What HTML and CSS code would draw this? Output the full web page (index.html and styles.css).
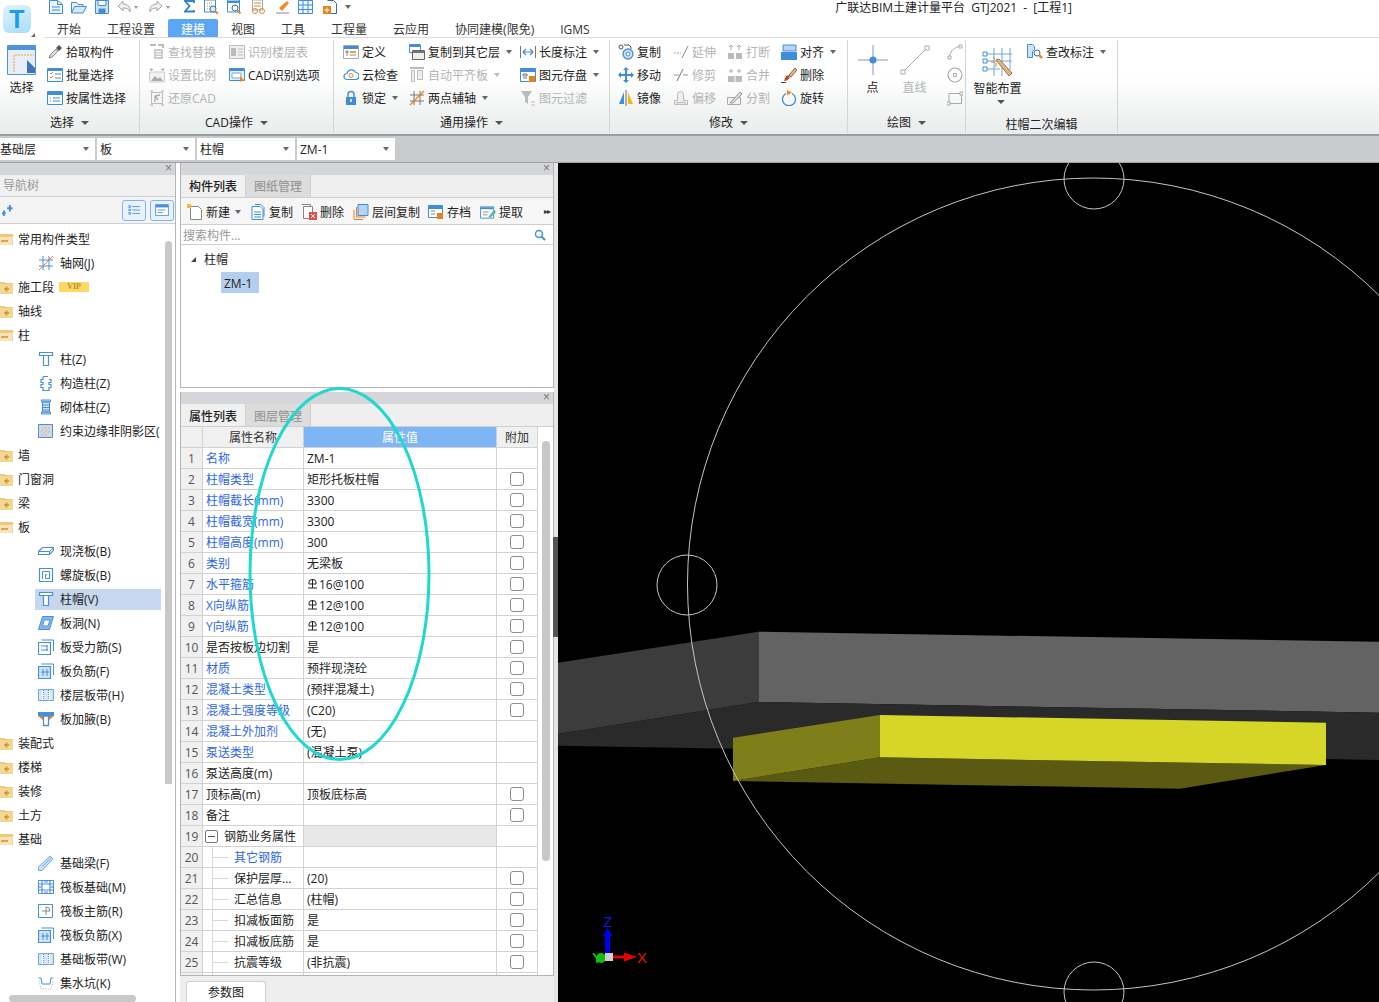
FILE: index.html
```html
<!DOCTYPE html>
<html lang="zh-CN">
<head>
<meta charset="utf-8">
<title>广联达BIM土建计量平台 GTJ2021 - [工程1]</title>
<link rel="stylesheet" href="styles.css">
</head>
<body>
<svg class="sprite" xmlns="http://www.w3.org/2000/svg">
<defs>
<symbol id="q-doc" viewBox="0 0 14 14"><path d="M.5.5h8l5 4v9H.5z" fill="#eaf3fc" stroke="#3f8fd8"/><path d="M8.500.5v4h5M3 7h8M3 10h8" fill="none" stroke="#3f8fd8"/></symbol>
<symbol id="q-open" viewBox="0 0 16 14"><path d="M.5 13V2.500h5l1.500 2h5v2" fill="#eaf3fc" stroke="#3f8fd8"/><path d="M.5 13l3-6.500h12L12 13z" fill="#d7e8f9" stroke="#3f8fd8"/></symbol>
<symbol id="q-save" viewBox="0 0 14 14"><path d="M.5.500h13v13H.5z" fill="#cfe3f7" stroke="#3f8fd8"/><path d="M3 .5h8v5H3z" fill="#fff" stroke="#3f8fd8"/><path d="M3.500 8.500h7v5h-7z" fill="#3f8fd8"/></symbol>
<symbol id="q-undo" viewBox="0 0 21 14"><path d="M6 1L1 6l5 5V8c4 0 6 1 7 4 1-5-2-8-7-8z" fill="#eee" stroke="#a9a9a9"/><path d="M17 6h4l-2 3z" fill="#999"/></symbol>
<symbol id="q-redo" viewBox="0 0 21 14"><path d="M8 1l5 5-5 5V8C4 8 2 9 1 12 0 7 3 4 8 4z" fill="#eee" stroke="#a9a9a9"/><path d="M17 6h4l-2 3z" fill="#999"/></symbol>
<symbol id="q-sum" viewBox="0 0 11 14"><path d="M10 3V1H1l4.500 5L1 11.500h9V10" fill="none" stroke="#2f82cf" stroke-width="1.800"/></symbol>
<symbol id="q-calc" viewBox="0 0 15 14"><path d="M.5 0h11v12H.5z" fill="#fff" stroke="#3f8fd8"/><path d="M3 3h6M3 6h6M3 9h4" stroke="#d98b3a" stroke-dasharray="1 1"/><circle cx="9" cy="9" r="3" fill="#dbe9f8" stroke="#3a6ea8"/><path d="M11 11l3 3" stroke="#e88a1c" stroke-width="2"/></symbol>
<symbol id="q-find" viewBox="0 0 15 14"><path d="M.5 0h12v12H.5z" fill="#fff" stroke="#3f8fd8"/><path d="M.5 1h12v2H.5z" fill="#3f8fd8"/><circle cx="8" cy="8" r="3" fill="#fff" stroke="#3a6ea8"/><path d="M10 10l3.500 3.500" stroke="#e88a1c" stroke-width="2"/></symbol>
<symbol id="q-report" viewBox="0 0 15 14"><path d="M1.500 0h10v10h-10z" fill="#fff" stroke="#aaa"/><path d="M3 3h7M3 6h7" stroke="#d98b3a"/><circle cx="4" cy="11" r="2.500" fill="none" stroke="#d98b3a"/><circle cx="11" cy="11" r="2.500" fill="none" stroke="#d98b3a"/></symbol>
<symbol id="q-pen" viewBox="0 0 15 14"><path d="M4 8l8-7 2 2-7 8z" fill="#ef8a2a"/><path d="M1 13h13" stroke="#8a8a8a"/></symbol>
<symbol id="q-grid" viewBox="0 0 15 14"><path d="M.5.5h14v13H.5zM5 .5v13M10 .5v13M.5 5h14M.5 9.500h14" fill="#eef5fc" stroke="#3f8fd8"/></symbol>
<symbol id="q-add" viewBox="0 0 15 14"><path d="M5.500.5h6l3 3v10H7" fill="#fff" stroke="#3a6ea8"/><path d="M1 6h8v8H1z" fill="#e8811d"/><path d="M5 7.500v5M2.500 10h5" stroke="#fff"/></symbol>
<symbol id="pick" viewBox="0 0 16 16"><path d="M2 14l1-3 6-6 2 2-6 6z" fill="#ddd" stroke="#888"/><path d="M9 4l3-3 3 3-3 3z" fill="#555"/></symbol>
<symbol id="batch" viewBox="0 0 16 16"><path d="M.5 1.500h15v13H.5z" fill="#fff" stroke="#3f8fd8"/><path d="M1 2h14v2H1z" fill="#3f8fd8"/><path d="M3 6l1 1 2-2M3 10l1 1 2-2" fill="none" stroke="#e88a1c"/><path d="M8 7h6M8 11h6" stroke="#3f8fd8"/></symbol>
<symbol id="attr" viewBox="0 0 16 16"><path d="M.5 1.500h15v13H.5z" fill="#fff" stroke="#3f8fd8"/><path d="M1 2h14v3H1z" fill="#3f8fd8"/><path d="M3 8h1M3 11h1" stroke="#3f8fd8"/><path d="M6 8h7M6 11h7" stroke="#3f8fd8"/></symbol>
<symbol id="selbig" viewBox="0 0 29 30"><path d="M.5.5h28v29H.5z" fill="#e7eef7" stroke="#4e94dc"/><path d="M1 1h27v4H1z" fill="#4e94dc"/><path d="M7 27V10h20" fill="none" stroke="#f0a030" stroke-dasharray="2 1"/><path d="M20 15l8 8v5h-8z" fill="#3d76b8"/></symbol>
<symbol id="find" viewBox="0 0 16 16"><path d="M5 5h9v10H5z" fill="#ccc"/><path d="M7 7.500h5M7 10h5M7 12.500h5" stroke="#fff"/><path d="M1 1h6M9 1h5v3" fill="none" stroke="#bbb" stroke-width="2"/></symbol>
<symbol id="floor" viewBox="0 0 16 16"><path d="M.5 1.500h15v13H.5z" fill="#f2f2f2" stroke="#bbb"/><path d="M2 4h5v8H2z" fill="#bbb"/><path d="M9 5h5M9 8h5M9 11h5" stroke="#bbb"/></symbol>
<symbol id="scale" viewBox="0 0 16 16"><path d="M.5 5h15v10H.5z" fill="#f2f2f2" stroke="#ccc"/><path d="M2 14l4-5 3 3 2-2 3 4z" fill="#aaa"/><path d="M2 1v3M14 1v3M1 2.500h3M12 2.500h3" stroke="#aaa"/></symbol>
<symbol id="cadopt" viewBox="0 0 16 16"><path d="M.5 1.500h15v12H.5z" fill="#e8f1fb" stroke="#3f8fd8"/><path d="M1 2h14v2H1z" fill="#3f8fd8"/><path d="M3 6h9v5H3z" fill="#fff" stroke="#7aa7d8"/><path d="M11 9l4 4-4 2z" fill="#e88a1c"/></symbol>
<symbol id="restore" viewBox="0 0 16 16"><path d="M2.500 2.500h11v11h-11z" fill="#f5f5f5" stroke="#bbb"/><path d="M11 5L6 6v6M6 6l3 4" fill="none" stroke="#aaa" stroke-width="1.300"/><path d="M1 1h3M12 1h3M1 15h3M12 15h3" stroke="#aaa"/></symbol>
<symbol id="def" viewBox="0 0 16 16"><path d="M.5 1.500h15v13H.5z" fill="#fff" stroke="#aaa"/><path d="M1 2h14v3H1z" fill="#3f8fd8"/><path d="M7 7h6v2H7z" fill="#f0a030"/><path d="M3 7h2v2H3zM3 11h2M7 11h6" fill="none" stroke="#888"/></symbol>
<symbol id="cloud" viewBox="0 0 16 16"><path d="M4 12.500a3 3 0 010-6 4.500 4.500 0 018.500-1 3.500 3.500 0 010 7z" fill="#fff" stroke="#3f8fd8" stroke-width="1.200"/><circle cx="8" cy="8.500" r="2" fill="none" stroke="#e88a1c"/></symbol>
<symbol id="lock" viewBox="0 0 16 16"><path d="M5 7V4.500a3 3 0 016 0V7" fill="none" stroke="#3f8fd8" stroke-width="1.500"/><path d="M3 7h10v8H3z" fill="#3f8fd8"/><path d="M8 9v3" stroke="#fff" stroke-width="1.500"/></symbol>
<symbol id="copyl" viewBox="0 0 16 16"><path d="M.5.5h11v8H.5z" fill="#fff" stroke="#3f8fd8"/><path d="M1 1h10v2H1z" fill="#3f8fd8"/><path d="M3.500 6.500h12v9h-12z" fill="#eee" stroke="#666"/><path d="M4 7h11v2H4z" fill="#777"/></symbol>
<symbol id="aalign" viewBox="0 0 16 16"><path d="M1 1h14" stroke="#bbb" stroke-width="2"/><path d="M2.500 3.500h3v11h-3zM8.500 3.500h5v9h-5z" fill="#eee" stroke="#bbb"/></symbol>
<symbol id="twopt" viewBox="0 0 16 16"><path d="M5 1v14M11 1v14M1 5h14M1 11h14" stroke="#777"/><path d="M1 15L15 1" stroke="#e8811d" stroke-width="1.200"/></symbol>
<symbol id="len" viewBox="0 0 16 16"><path d="M.5 2v12M15.500 2v12" stroke="#777"/><path d="M3 8h10M3 8l3-3M3 8l3 3M13 8l-3-3M13 8l-3 3" fill="none" stroke="#3f8fd8" stroke-width="1.200"/></symbol>
<symbol id="esave" viewBox="0 0 16 16"><path d="M.5 1.500h15v13H.5z" fill="#fff" stroke="#3f8fd8"/><path d="M1 2h14v3H1z" fill="#3f8fd8"/><path d="M3 7h4v2H3zM3 11h4" fill="none" stroke="#777"/><path d="M9 9h6v6H9z" fill="#e8811d"/></symbol>
<symbol id="filter" viewBox="0 0 16 16"><path d="M1 1h11L8 7v7L5 12V7z" fill="#bbb"/><path d="M11 12h4M11 15h4" stroke="#bbb"/></symbol>
<symbol id="copy" viewBox="0 0 16 16"><circle cx="3" cy="3" r="2" fill="#fff" stroke="#555"/><path d="M6 1h5l2 2v2" fill="none" stroke="#555"/><circle cx="10" cy="10" r="5" fill="#cfe3f7" stroke="#3f8fd8" stroke-width="1.300"/><circle cx="10" cy="10" r="2" fill="#fff" stroke="#3f8fd8"/></symbol>
<symbol id="move" viewBox="0 0 16 16"><path d="M8 0l3 3H9v4h4V5l3 3-3 3V9H9v4h2l-3 3-3-3h2V9H3v2L0 8l3-3v2h4V3H5z" fill="#3f8fd8"/></symbol>
<symbol id="mirror" viewBox="0 0 16 16"><path d="M6 2v12H1z" fill="#3f8fd8"/><path d="M10 2v12h5z" fill="#f5b21b"/><path d="M8 0v16" stroke="#666"/></symbol>
<symbol id="extend" viewBox="0 0 16 16"><path d="M1 9h7" stroke="#aaa" stroke-dasharray="2 1"/><path d="M9 14L15 2" stroke="#888"/></symbol>
<symbol id="trim" viewBox="0 0 16 16"><path d="M1 8h5M10 8h5" stroke="#999"/><path d="M4 14L10 2" stroke="#777"/><path d="M11 8h4" stroke="#bbb" stroke-dasharray="1 1"/></symbol>
<symbol id="offset" viewBox="0 0 16 16"><path d="M1.500 14.500v-4h3v-6a3 3 0 016 0v6h4v4z" fill="#eee" stroke="#bbb"/><path d="M4 14.500v-2h8v2" fill="none" stroke="#bbb"/></symbol>
<symbol id="break" viewBox="0 0 16 16"><path d="M1 9h6v6H1zM9 9h6v6H9z" fill="#bbb"/><path d="M4 1v5M12 1v5M2 3l2-2 2 2M10 3l2-2 2 2" fill="none" stroke="#aaa"/></symbol>
<symbol id="merge" viewBox="0 0 16 16"><path d="M1 9h14v6H1z" fill="#bbb"/><path d="M8 9v6" stroke="#fff"/><path d="M4 2v4M12 2v4" stroke="#aaa"/><path d="M2 4h4M10 4h4" stroke="#aaa"/></symbol>
<symbol id="split" viewBox="0 0 16 16"><path d="M.5 7.500h13v7H.5z" fill="#f2f2f2" stroke="#aaa"/><path d="M3 13L13 2l2 2-9 9z" fill="#ddd" stroke="#999"/></symbol>
<symbol id="align" viewBox="0 0 16 16"><path d="M2 1h13v6H2z" fill="#b9d4f2" stroke="#3f8fd8"/><path d="M0 8h16v8H0z" fill="#3f8fd8"/></symbol>
<symbol id="del" viewBox="0 0 16 16"><path d="M8 8l6-7 2 2-6 7z" fill="#d9b98a" stroke="#8a6a3a"/><path d="M3 14c3 0 5-2 6-4L7 8c-3 1-3 4-4 6z" fill="#a8512a"/><path d="M0 15.500h5" stroke="#444"/></symbol>
<symbol id="rotate" viewBox="0 0 16 16"><path d="M5 3.500a6.500 6.500 0 106 0" fill="none" stroke="#3f8fd8" stroke-width="1.300"/><path d="M6 0l5 2.500-5 3z" fill="#f09020"/></symbol>
<symbol id="point" viewBox="0 0 30 30"><path d="M15 0v30M0 15h30" stroke="#7e9cc0"/><circle cx="15" cy="15" r="3.500" fill="#3f8fd8"/></symbol>
<symbol id="line" viewBox="0 0 30 30"><path d="M3 27L27 3" stroke="#aaa"/><path d="M1 25h4v4H1zM25 1h4v4h-4z" fill="#fff" stroke="#aaa"/></symbol>
<symbol id="arc" viewBox="0 0 16 16"><path d="M2.500 13C3 7 8 2.500 13.500 2.500" fill="none" stroke="#aaa"/><path d="M1 12h3v3H1zM12 1h3v3h-3z" fill="#fff" stroke="#aaa"/></symbol>
<symbol id="circ" viewBox="0 0 16 16"><circle cx="8" cy="8" r="7" fill="#fff" stroke="#aaa" stroke-width="1.200"/><path d="M6.500 6.500h3v3h-3z" fill="#fff" stroke="#aaa"/></symbol>
<symbol id="rect" viewBox="0 0 16 16"><path d="M2 3.500h12.500v10H2z" fill="none" stroke="#aaa"/><path d="M0 12h3v3H0zM13 2h3v3h-3z" fill="#fff" stroke="#aaa"/></symbol>
<symbol id="smart" viewBox="0 0 31 30"><path d="M12 1v28M20 1v28M28 1v22M4 7h26M4 14h26M4 22h14" stroke="#6aa8e6"/><path d="M1 5h4v4H1zM1 12h4v4H1zM1 20h4v4H1z" fill="#fff" stroke="#3f8fd8"/><path d="M14 13l3-1 13 14-3 3z" fill="#d9b98a" stroke="#a8702a"/><path d="M11 10l2 2M14 16v4M9 15h4" stroke="#f07020"/></symbol>
<symbol id="check" viewBox="0 0 16 16"><path d="M.5.500h5l2 2v3l-2 2v6h-5z" fill="#cfe3f7" stroke="#3f8fd8"/><circle cx="10" cy="9" r="3" fill="#fff" stroke="#3a6ea8"/><path d="M12 11l3 3" stroke="#e88a1c" stroke-width="2.500"/></symbol>
<symbol id="fp" viewBox="0 0 13 13"><path d="M0 1h5l1 1h7v11H0z" fill="#f1c97a"/><path d="M0 3h13v10H0z" fill="#f5d793"/><path d="M6.500 5.500v5M4 8h5" stroke="#c89338" stroke-width="1.500"/></symbol>
<symbol id="fm" viewBox="0 0 13 13"><path d="M0 1h13v11H0z" fill="#f1c97a"/><path d="M0 4h13l-1 8H0z" fill="#f8e3b5"/><path d="M1 8h7" stroke="#c89338" stroke-width="1.500"/></symbol>
<symbol id="n-grid" viewBox="0 0 16 16"><path d="M5 1v14M11 1v14M1 5h14M1 11h14" stroke="#4a8fdc"/><path d="M1 15L15 1" stroke="#e8811d"/></symbol>
<symbol id="n-col" viewBox="0 0 16 16"><path d="M1.500 1.500h13v3h-13zM5.500 4.500h5v10h-5z" fill="#fff" stroke="#4a8fdc" stroke-width="1.200"/></symbol>
<symbol id="n-gz" viewBox="0 0 16 16"><path d="M5 1h6v3H5zM3 4h10v3H3zM5 7h6v2H5zM3 9h10v3H3zM5 12h6v3H5z" fill="#fff"/><path d="M5 1.500h5M5 1.500v3H3v3h2v2H3v3h2v3h6v-3h2v-3h-2v-2h2v-3h-2" fill="none" stroke="#4a8fdc" stroke-width="1.200"/></symbol>
<symbol id="n-br" viewBox="0 0 16 16"><path d="M3.500 1h9v2h-9zM4.500 3h7v10h-7zM3.500 13h9v2h-9z" fill="#cfe3f7" stroke="#4a8fdc"/><path d="M5 6h6M5 8.500h6M5 11h6" stroke="#4a8fdc"/></symbol>
<symbol id="n-cons" viewBox="0 0 16 16"><path d="M.5 1.500h14v13H.5z" fill="#d8d8d8" stroke="#4a8fdc"/><path d="M3 13l9-9M3 9l5-5M7 13l5-5" stroke="#aaa" stroke-dasharray="1 1"/></symbol>
<symbol id="n-slab" viewBox="0 0 16 16"><path d="M.5 8.500l4-4h11v3l-4 4h-11z" fill="#fff" stroke="#4a8fdc" stroke-width="1.200"/><path d="M.5 8.500h11l4-4M11.500 8.500v3" fill="none" stroke="#4a8fdc"/></symbol>
<symbol id="n-sp" viewBox="0 0 16 16"><path d="M1.500 1.500h13v13h-13z" fill="#fff" stroke="#4a8fdc" stroke-width="1.200"/><path d="M4.500 12V4.500h7v7H7.500V7.500h1.500" fill="none" stroke="#4a8fdc"/></symbol>
<symbol id="n-hole" viewBox="0 0 16 16"><path d="M4.500 1.500h11l-4 13H.5z" fill="#86b5e8" stroke="#4a8fdc"/><path d="M6 5h6l-2 6H4.500z" fill="#fff" stroke="#4a8fdc"/></symbol>
<symbol id="n-bar" viewBox="0 0 16 16"><path d="M3.500 1h12v11" fill="none" stroke="#4a8fdc"/><path d="M.5 3.500h12v12H.5z" fill="#fff" stroke="#4a8fdc" stroke-width="1.200"/><path d="M3 7h7M3 11h7M9 6v6" stroke="#4a8fdc"/></symbol>
<symbol id="n-neg" viewBox="0 0 16 16"><path d="M3.500 1h12v11" fill="none" stroke="#4a8fdc"/><path d="M.5 3.500h12v12H.5z" fill="#cfe3f7" stroke="#4a8fdc" stroke-width="1.200"/><path d="M3 9h8M5 6v7M9 6v7" stroke="#4a8fdc"/></symbol>
<symbol id="n-band" viewBox="0 0 16 16"><path d="M.5 2.500h15v11H.5z" fill="#d6e6f7" stroke="#6aa8e6"/><path d="M5 3v10M11 3v10" stroke="#fff" stroke-width="2"/><path d="M5.500 3v10M10.500 3v10" stroke="#4a8fdc" stroke-dasharray="1 1"/></symbol>
<symbol id="n-haunch" viewBox="0 0 16 16"><path d="M0 1h16v4H0z" fill="#4a8fdc"/><path d="M0 5h5v4zM16 5h-5v4z" fill="#e8811d"/><path d="M5.500 5h5v9.500h-5z" fill="#fff" stroke="#4a8fdc" stroke-width="1.300"/></symbol>
<symbol id="n-beam" viewBox="0 0 16 16"><path d="M.5 12L12 1l3 3L4 15.500H.5z" fill="#cfe3f7" stroke="#6aa8e6"/><path d="M4 12L14 2" stroke="#6aa8e6"/></symbol>
<symbol id="n-raft" viewBox="0 0 16 16"><path d="M.5 1.500h15v13H.5z" fill="#fff" stroke="#4a8fdc"/><path d="M.5 5h15M.5 11h15M4 1.500v13M12 1.500v13M6 3h4M6 13h4M2 7v2M14 7v2" stroke="#4a8fdc" stroke-width="1.200"/></symbol>
<symbol id="n-main" viewBox="0 0 16 16"><path d="M.5 1.500h14v13H.5z" fill="#fff" stroke="#4a8fdc"/><path d="M8 4v8M4 8h8" stroke="#888"/><path d="M8 4a4 4 0 014 4" fill="none" stroke="#888"/></symbol>
<symbol id="n-pit" viewBox="0 0 16 16"><path d="M.5 3h2.500l1 6h8l1-6h2.500" fill="none" stroke="#4a8fdc"/><path d="M1 6l2 8h10l2-8" fill="none" stroke="#aaa" stroke-dasharray="1 1.500"/></symbol>
<symbol id="n-add" viewBox="0 0 13 12"><path d="M7.500 0v7M4.500 3.500h6M1 6v6M-1 9h4" transform="translate(1 0)" stroke="#3f8fd8" stroke-width="2" fill="none"/></symbol>
<symbol id="v-list" viewBox="0 0 16 14"><path d="M2 2h2v2H2zM2 6h2v2H2zM2 10h2v2H2z" fill="none" stroke="#4a8fdc"/><path d="M6 3h9M6 7h9M6 11h9" stroke="#4a8fdc"/></symbol>
<symbol id="v-panel" viewBox="0 0 16 14"><path d="M.5.500h15v13H.5z" fill="#fff" stroke="#4a8fdc"/><path d="M1 1h14v3H1z" fill="#4a8fdc"/><path d="M3 7h9M3 10h6" stroke="#4a8fdc"/></symbol>
<symbol id="m-new" viewBox="0 0 16 16"><path d="M3.500 2.500h8l3 3v10h-11z" fill="#fff" stroke="#888"/><path d="M0 0h4v4H0z" fill="#f3b93a"/></symbol>
<symbol id="m-copy" viewBox="0 0 14 16"><path d="M4 .5h6l3 3v9" fill="none" stroke="#3f8fd8"/><path d="M1 2.500h8l3 3v10H1z" fill="#fff" stroke="#3f8fd8"/><path d="M3 8h7M3 10.500h7M3 13h7" stroke="#3f8fd8"/></symbol>
<symbol id="m-del" viewBox="0 0 16 16"><path d="M.5.5h9v10" fill="none" stroke="#888"/><path d="M2.500 2.500h9v12h-9z" fill="#fff" stroke="#888"/><path d="M8 8h8v8H8z" fill="#e0504a"/><path d="M10 10l4 4M14 10l-4 4" stroke="#fff"/></symbol>
<symbol id="m-layer" viewBox="0 0 15 16"><path d="M4.500.5h10v11h-10z" fill="#b6d3f3" stroke="#3f8fd8"/><path d="M3 3v10h9M.5 6v9.500h9" fill="none" stroke="#e8811d"/></symbol>
<symbol id="m-arch" viewBox="0 0 16 16"><path d="M.5 1.500h14v12H.5z" fill="#fff" stroke="#3f8fd8"/><path d="M1 2h13v3H1z" fill="#3f8fd8"/><path d="M3 7h4M3 10h4" stroke="#888"/><path d="M9 9h6v6H9z" fill="#e8811d"/></symbol>
<symbol id="m-ext" viewBox="0 0 17 16"><path d="M.5 2.500h14v12H.5z" fill="#fff" stroke="#3f8fd8"/><path d="M1 3h13v2H1z" fill="#3f8fd8"/><path d="M3 8h6M3 11h5" stroke="#888"/><path d="M9 13l6-7 2 2-6 6z" fill="#4db6a8"/></symbol>
<symbol id="m-srch" viewBox="0 0 12 12"><circle cx="5" cy="5" r="3.500" fill="none" stroke="#3f95d8" stroke-width="1.500"/><path d="M7.500 7.500l3.500 3.500" stroke="#3f95d8" stroke-width="2"/></symbol>
<symbol id="rebar" viewBox="0 0 9 10"><path d="M1 5V3a3.500 2.500 0 017 0v2zM4.500 0v9M0 9h9" fill="none" stroke="#222"/></symbol>
</defs>
</svg>

<header class="top">
  <div class="logo-col">
    <div class="logo"><span class="logo-t">T</span></div>
    <i class="logo-mark"></i>
  </div>
  <div class="top-right">
    <div class="quick">
      <svg class="q w14"><use href="#q-doc"/></svg>
      <svg class="q w16"><use href="#q-open"/></svg>
      <svg class="q w14"><use href="#q-save"/></svg>
      <svg class="q w21"><use href="#q-undo"/></svg>
      <svg class="q w21 ml3"><use href="#q-redo"/></svg>
      <svg class="q w11 ml6"><use href="#q-sum"/></svg>
      <svg class="q w15 ml1"><use href="#q-calc"/></svg>
      <svg class="q w15"><use href="#q-find"/></svg>
      <svg class="q w15 ml1"><use href="#q-report"/></svg>
      <svg class="q w15 ml1"><use href="#q-pen"/></svg>
      <svg class="q w15"><use href="#q-grid"/></svg>
      <svg class="q w15 ml1"><use href="#q-add"/></svg>
      <span class="q-more"></span>
      <div class="title">广联达BIM土建计量平台 GTJ2021 - [工程1]</div>
    </div>
    <nav class="tabs">
      <span class="tab">开始</span><span class="tab">工程设置</span><span class="tab active">建模</span><span class="tab">视图</span><span class="tab">工具</span><span class="tab">工程量</span><span class="tab">云应用</span><span class="tab">协同建模(限免)</span><span class="tab">IGMS</span>
    </nav>
  </div>
</header>

<section class="ribbon">
  <div class="rg g1">
    <div class="rg-body pl7">
      <div class="col big w40"><svg class="big-ic"><use href="#selbig"/></svg><span class="big-lb">选择</span></div>
      <div class="col">
        <div class="ri"><svg class="ic"><use href="#pick"/></svg><span>拾取构件</span></div>
        <div class="ri"><svg class="ic"><use href="#batch"/></svg><span>批量选择</span></div>
        <div class="ri"><svg class="ic"><use href="#attr"/></svg><span>按属性选择</span></div>
      </div>
    </div>
    <div class="rg-label">选择<i class="caret dark"></i></div>
  </div>
  <div class="rg g2">
    <div class="rg-body pl9">
      <div class="col w80">
        <div class="ri off"><svg class="ic"><use href="#find"/></svg><span>查找替换</span></div>
        <div class="ri off"><svg class="ic"><use href="#scale"/></svg><span>设置比例</span></div>
        <div class="ri off"><svg class="ic"><use href="#restore"/></svg><span>还原CAD</span></div>
      </div>
      <div class="col">
        <div class="ri off"><svg class="ic"><use href="#floor"/></svg><span>识别楼层表</span></div>
        <div class="ri"><svg class="ic"><use href="#cadopt"/></svg><span>CAD识别选项</span></div>
      </div>
    </div>
    <div class="rg-label">CAD操作<i class="caret dark"></i></div>
  </div>
  <div class="rg g3">
    <div class="rg-body pl9">
      <div class="col w66">
        <div class="ri"><svg class="ic"><use href="#def"/></svg><span>定义</span></div>
        <div class="ri"><svg class="ic"><use href="#cloud"/></svg><span>云检查</span></div>
        <div class="ri"><svg class="ic"><use href="#lock"/></svg><span>锁定</span><i class="caret"></i></div>
      </div>
      <div class="col w111">
        <div class="ri"><svg class="ic"><use href="#copyl"/></svg><span>复制到其它层</span><i class="caret"></i></div>
        <div class="ri off"><svg class="ic"><use href="#aalign"/></svg><span>自动平齐板</span><i class="caret light"></i></div>
        <div class="ri"><svg class="ic"><use href="#twopt"/></svg><span>两点辅轴</span><i class="caret"></i></div>
      </div>
      <div class="col">
        <div class="ri"><svg class="ic"><use href="#len"/></svg><span>长度标注</span><i class="caret"></i></div>
        <div class="ri"><svg class="ic"><use href="#esave"/></svg><span>图元存盘</span><i class="caret"></i></div>
        <div class="ri off"><svg class="ic"><use href="#filter"/></svg><span>图元过滤</span></div>
      </div>
    </div>
    <div class="rg-label">通用操作<i class="caret dark"></i></div>
  </div>
  <div class="rg g4">
    <div class="rg-body pl8">
      <div class="col w55">
        <div class="ri"><svg class="ic"><use href="#copy"/></svg><span>复制</span></div>
        <div class="ri"><svg class="ic"><use href="#move"/></svg><span>移动</span></div>
        <div class="ri"><svg class="ic"><use href="#mirror"/></svg><span>镜像</span></div>
      </div>
      <div class="col w54">
        <div class="ri off"><svg class="ic"><use href="#extend"/></svg><span>延伸</span></div>
        <div class="ri off"><svg class="ic"><use href="#trim"/></svg><span>修剪</span></div>
        <div class="ri off"><svg class="ic"><use href="#offset"/></svg><span>偏移</span></div>
      </div>
      <div class="col w54">
        <div class="ri off"><svg class="ic"><use href="#break"/></svg><span>打断</span></div>
        <div class="ri off"><svg class="ic"><use href="#merge"/></svg><span>合并</span></div>
        <div class="ri off"><svg class="ic"><use href="#split"/></svg><span>分割</span></div>
      </div>
      <div class="col">
        <div class="ri"><svg class="ic"><use href="#align"/></svg><span>对齐</span><i class="caret"></i></div>
        <div class="ri"><svg class="ic"><use href="#del"/></svg><span>删除</span></div>
        <div class="ri"><svg class="ic"><use href="#rotate"/></svg><span>旋转</span></div>
      </div>
    </div>
    <div class="rg-label">修改<i class="caret dark"></i></div>
  </div>
  <div class="rg g5">
    <div class="rg-body pl10">
      <div class="col big w42"><svg class="big-ic b30"><use href="#point"/></svg><span class="big-lb">点</span></div>
      <div class="col big w47"><svg class="big-ic b30"><use href="#line"/></svg><span class="big-lb off-t">直线</span></div>
      <div class="col">
        <div class="ri"><svg class="ic"><use href="#arc"/></svg></div>
        <div class="ri"><svg class="ic"><use href="#circ"/></svg></div>
        <div class="ri"><svg class="ic"><use href="#rect"/></svg></div>
      </div>
    </div>
    <div class="rg-label">绘图<i class="caret dark"></i></div>
  </div>
  <div class="rg g6">
    <div class="rg-body pl7">
      <div class="col big w54"><svg class="big-ic smart"><use href="#smart"/></svg><span class="big-lb">智能布置</span><i class="caret dark under"></i></div>
      <div class="col">
        <div class="ri"><svg class="ic"><use href="#check"/></svg><span>查改标注</span><i class="caret"></i></div>
      </div>
    </div>
    <div class="rg-label low">柱帽二次编辑</div>
  </div>
</section>

<section class="selbar">
  <div class="sel first"><span>基础层</span><i class="caret"></i></div>
  <div class="sel"><span>板</span><i class="caret"></i></div>
  <div class="sel"><span>柱帽</span><i class="caret"></i></div>
  <div class="sel"><span>ZM-1</span><i class="caret"></i></div>
</section>

<main class="main">
  <aside class="nav">
    <div class="strip"><span class="x">×</span></div>
    <div class="nav-title">导航树</div>
    <div class="nav-tools">
      <svg class="nav-add"><use href="#n-add"/></svg>
      <span class="vbtn"><svg class="vic"><use href="#v-list"/></svg></span>
      <span class="vbtn"><svg class="vic"><use href="#v-panel"/></svg></span>
    </div>
    <div class="nav-body">
      <div class="tree">
        <div class="tg"><svg class="fo"><use href="#fm"/></svg><span>常用构件类型</span></div>
        <div class="tc"><div class="tci"><svg class="ic"><use href="#n-grid"/></svg><span>轴网(J)</span></div></div>
        <div class="tg"><svg class="fo"><use href="#fp"/></svg><span>施工段</span><b class="vip">VIP</b></div>
        <div class="tg"><svg class="fo"><use href="#fp"/></svg><span>轴线</span></div>
        <div class="tg"><svg class="fo"><use href="#fm"/></svg><span>柱</span></div>
        <div class="tc"><div class="tci"><svg class="ic"><use href="#n-col"/></svg><span>柱(Z)</span></div></div>
        <div class="tc"><div class="tci"><svg class="ic"><use href="#n-gz"/></svg><span>构造柱(Z)</span></div></div>
        <div class="tc"><div class="tci"><svg class="ic"><use href="#n-br"/></svg><span>砌体柱(Z)</span></div></div>
        <div class="tc"><div class="tci"><svg class="ic"><use href="#n-cons"/></svg><span>约束边缘非阴影区(</span></div></div>
        <div class="tg"><svg class="fo"><use href="#fp"/></svg><span>墙</span></div>
        <div class="tg"><svg class="fo"><use href="#fp"/></svg><span>门窗洞</span></div>
        <div class="tg"><svg class="fo"><use href="#fp"/></svg><span>梁</span></div>
        <div class="tg"><svg class="fo"><use href="#fm"/></svg><span>板</span></div>
        <div class="tc"><div class="tci"><svg class="ic"><use href="#n-slab"/></svg><span>现浇板(B)</span></div></div>
        <div class="tc"><div class="tci"><svg class="ic"><use href="#n-sp"/></svg><span>螺旋板(B)</span></div></div>
        <div class="tc"><div class="tci sel-row"><svg class="ic"><use href="#n-col"/></svg><span>柱帽(V)</span></div></div>
        <div class="tc"><div class="tci"><svg class="ic"><use href="#n-hole"/></svg><span>板洞(N)</span></div></div>
        <div class="tc"><div class="tci"><svg class="ic"><use href="#n-bar"/></svg><span>板受力筋(S)</span></div></div>
        <div class="tc"><div class="tci"><svg class="ic"><use href="#n-neg"/></svg><span>板负筋(F)</span></div></div>
        <div class="tc"><div class="tci"><svg class="ic"><use href="#n-band"/></svg><span>楼层板带(H)</span></div></div>
        <div class="tc"><div class="tci"><svg class="ic"><use href="#n-haunch"/></svg><span>板加腋(B)</span></div></div>
        <div class="tg"><svg class="fo"><use href="#fp"/></svg><span>装配式</span></div>
        <div class="tg"><svg class="fo"><use href="#fp"/></svg><span>楼梯</span></div>
        <div class="tg"><svg class="fo"><use href="#fp"/></svg><span>装修</span></div>
        <div class="tg"><svg class="fo"><use href="#fp"/></svg><span>土方</span></div>
        <div class="tg"><svg class="fo"><use href="#fm"/></svg><span>基础</span></div>
        <div class="tc"><div class="tci"><svg class="ic"><use href="#n-beam"/></svg><span>基础梁(F)</span></div></div>
        <div class="tc"><div class="tci"><svg class="ic"><use href="#n-raft"/></svg><span>筏板基础(M)</span></div></div>
        <div class="tc"><div class="tci"><svg class="ic"><use href="#n-main"/></svg><span>筏板主筋(R)</span></div></div>
        <div class="tc"><div class="tci"><svg class="ic"><use href="#n-neg"/></svg><span>筏板负筋(X)</span></div></div>
        <div class="tc"><div class="tci"><svg class="ic"><use href="#n-band"/></svg><span>基础板带(W)</span></div></div>
        <div class="tc"><div class="tci"><svg class="ic"><use href="#n-pit"/></svg><span>集水坑(K)</span></div></div>
        <div class="hbar"></div>
      </div>
      <div class="nav-track"><div class="nav-thumb"></div></div>
    </div>
  </aside>

  <div class="mid">
    <section class="panel p1">
      <div class="strip"><span class="x">×</span></div>
      <div class="ptabs t22"><span class="ptab on">构件列表</span><span class="ptab">图纸管理</span></div>
      <div class="ptools">
        <span class="pt w63"><svg class="ic"><use href="#m-new"/></svg><span>新建</span><i class="caret"></i></span>
        <span class="pt w51"><svg class="ic"><use href="#m-copy"/></svg><span>复制</span></span>
        <span class="pt w52"><svg class="ic"><use href="#m-del"/></svg><span>删除</span></span>
        <span class="pt w75"><svg class="ic"><use href="#m-layer"/></svg><span>层间复制</span></span>
        <span class="pt w52"><svg class="ic"><use href="#m-arch"/></svg><span>存档</span></span>
        <span class="pt w62"><svg class="ic"><use href="#m-ext"/></svg><span>提取</span></span>
        <span class="more">▸▸</span>
      </div>
      <div class="search"><span>搜索构件...</span><svg class="srch"><use href="#m-srch"/></svg></div>
      <div class="clist">
        <div class="cgroup"><i class="tri"></i><span>柱帽</span></div>
        <div class="citem"><span>ZM-1</span></div>
      </div>
    </section>
    <section class="panel p2">
      <div class="strip"><span class="x">×</span></div>
      <div class="ptabs t23"><span class="ptab on">属性列表</span><span class="ptab">图层管理</span></div>
      <div class="tbl-wrap">
        <table class="props">
          <colgroup><col class="c0"><col class="c1"><col class="c2"><col class="c3"></colgroup>
          <thead><tr><th></th><th>属性名称</th><th class="hl">属性值</th><th>附加</th></tr></thead>
          <tbody>
            <tr><td>1</td><td class="blue">名称</td><td>ZM-1</td><td></td></tr>
            <tr><td>2</td><td class="blue">柱帽类型</td><td>矩形托板柱帽</td><td><i class="cb"></i></td></tr>
            <tr><td>3</td><td class="blue">柱帽截长(mm)</td><td>3300</td><td><i class="cb"></i></td></tr>
            <tr><td>4</td><td class="blue">柱帽截宽(mm)</td><td>3300</td><td><i class="cb"></i></td></tr>
            <tr><td>5</td><td class="blue">柱帽高度(mm)</td><td>300</td><td><i class="cb"></i></td></tr>
            <tr><td>6</td><td class="blue">类别</td><td>无梁板</td><td><i class="cb"></i></td></tr>
            <tr><td>7</td><td class="blue">水平箍筋</td><td><svg class="rb"><use href="#rebar"/></svg>16@100</td><td><i class="cb"></i></td></tr>
            <tr><td>8</td><td class="blue">X向纵筋</td><td><svg class="rb"><use href="#rebar"/></svg>12@100</td><td><i class="cb"></i></td></tr>
            <tr><td>9</td><td class="blue">Y向纵筋</td><td><svg class="rb"><use href="#rebar"/></svg>12@100</td><td><i class="cb"></i></td></tr>
            <tr><td>10</td><td>是否按板边切割</td><td>是</td><td><i class="cb"></i></td></tr>
            <tr><td>11</td><td class="blue">材质</td><td>预拌现浇砼</td><td><i class="cb"></i></td></tr>
            <tr><td>12</td><td class="blue">混凝土类型</td><td>(预拌混凝土)</td><td><i class="cb"></i></td></tr>
            <tr><td>13</td><td class="blue">混凝土强度等级</td><td>(C20)</td><td><i class="cb"></i></td></tr>
            <tr><td>14</td><td class="blue">混凝土外加剂</td><td>(无)</td><td></td></tr>
            <tr><td>15</td><td class="blue">泵送类型</td><td>(混凝土泵)</td><td></td></tr>
            <tr><td>16</td><td>泵送高度(m)</td><td></td><td></td></tr>
            <tr><td>17</td><td>顶标高(m)</td><td>顶板底标高</td><td><i class="cb"></i></td></tr>
            <tr><td>18</td><td>备注</td><td></td><td><i class="cb"></i></td></tr>
            <tr><td>19</td><td class="grp"><i class="minus"></i>钢筋业务属性</td><td class="gv"></td><td></td></tr>
            <tr><td>20</td><td class="sub blue">其它钢筋</td><td></td><td></td></tr>
            <tr><td>21</td><td class="sub">保护层厚...</td><td>(20)</td><td><i class="cb"></i></td></tr>
            <tr><td>22</td><td class="sub">汇总信息</td><td>(柱帽)</td><td><i class="cb"></i></td></tr>
            <tr><td>23</td><td class="sub">扣减板面筋</td><td>是</td><td><i class="cb"></i></td></tr>
            <tr><td>24</td><td class="sub">扣减板底筋</td><td>是</td><td><i class="cb"></i></td></tr>
            <tr><td>25</td><td class="sub">抗震等级</td><td>(非抗震)</td><td><i class="cb"></i></td></tr>
            <tr><td></td><td class="sub"></td><td></td><td></td></tr>
          </tbody>
        </table>
        <div class="tbl-track"><div class="tbl-thumb"></div></div>
      </div>
    </section>
    <div class="bottom-tabs"><span class="btab">参数图</span></div>
  </div>

  <div class="splitter"><i class="grip"></i></div>

  <div class="canvas">
    <svg class="scene" viewBox="558 163 821 839" xmlns="http://www.w3.org/2000/svg">
      <polygon points="558,662.700 758.500,631.700 758.500,702 558,734" fill="#3c3c3c"/>
      <polygon points="758.500,631.700 1379,641.700 1379,712.700 758.500,702" fill="#636363"/>
      <polygon points="558,734 758.500,702 1379,712.700 1379,760 558,745.700" fill="#2a2a2a"/>
      <polygon points="733,781 880,757.300 1326,765 1180,788.700" fill="#5a5a12"/>
      <polygon points="733,737.700 880,715 880,757.300 733,781" fill="#7f7f1a"/>
      <polygon points="880,715 1326,722.700 1326,765 880,757.300" fill="#d6d628"/>
      <g fill="none" stroke="#c4c4c4" stroke-width="1">
        <circle cx="1093.500" cy="584" r="406"/>
        <circle cx="1094" cy="179" r="30"/>
        <circle cx="687" cy="585" r="30"/>
        <circle cx="1094" cy="992" r="30"/>
      </g>
      <text x="603" y="927" class="ax" fill="#1414e0">Z</text>
      <path d="M607.500 928l5 8h-2.500v17h-5v-17h-2.500z" fill="#0000f0"/>
      <path d="M612 955.500h12v-3l13 4.500-13 4.500v-3h-12z" fill="#e80000"/>
      <text x="637" y="963" class="ax" fill="#e01414">X</text>
      <text x="592" y="963" class="ax" fill="#18e018">Y</text>
      <circle cx="601" cy="958" r="5" fill="#10c010"/>
      <rect x="605" y="953" width="8" height="8" fill="#d0d0d0"/>
    </svg>
  </div>
</main>

<svg class="mark" viewBox="0 0 1379 1002" xmlns="http://www.w3.org/2000/svg">
  <ellipse cx="339.500" cy="574" rx="89.500" ry="185.500" fill="none" stroke="#1fd8d0" stroke-width="3"/>
</svg>
</body>
</html>
```
FILE: styles.css
```css
* { box-sizing: border-box; }
html, body { margin: 0; padding: 0; }
body {
  position: relative;
  width: 1379px;
  height: 1002px;
  overflow: hidden;
  background: #fff;
  color: #222;
  font: 12px/16px "Open Sans", "Noto Sans CJK SC", sans-serif;
  display: flex;
  flex-direction: column;
}
.sprite { width: 0; height: 0; position: absolute; }
svg { display: block; flex: none; overflow: visible; }
.ic { width: 16px; height: 16px; }

/* text in centred flex rows sits one pixel lower than its icon */
.ri span, .tg span, .tci span, .pt span, .sel span, .search span, .cgroup span { padding-top: 2px; }

/* header */
.top { display: flex; height: 38px; flex: none; }
.logo-col { width: 44px; position: relative; border-right: 1px solid transparent; }
.logo {
  width: 28px; height: 28px; margin: 5px 0 0 3px;
  border-radius: 6px;
  background: linear-gradient(160deg, #dff3fe, #a9ddfb);
  display: flex; align-items: center; justify-content: center;
}
.logo-t { color: #1c9cf0; font: bold 25px/28px "Liberation Sans", sans-serif; }
.logo-mark { position: absolute; left: 31px; top: 33px; border: 2px solid transparent; border-right-color: #666; border-bottom-color: #666; }
.top-right { flex: 1; display: flex; flex-direction: column; }
.quick { height: 19px; display: flex; align-items: flex-start; padding: 0 307px 0 5px; gap: 8px; }
.q { height: 14px; }
.w14 { width: 14px; } .w16 { width: 16px; } .w21 { width: 21px; } .w11 { width: 11px; } .w15 { width: 15px; }
.ml1 { margin-left: 1px; } .ml3 { margin-left: 3px; } .ml6 { margin-left: 6px; }
.q-more { width: 6px; height: 6px; margin-top: 5px; border: 3px solid transparent; border-top: 4px solid #666; box-shadow: 0 -2px 0 -1px #fff; }
.title { margin-left: auto; line-height: 16px; white-space: nowrap; color: #222; word-spacing: 3px; }
.tabs { height: 19px; display: flex; border-bottom: 1px solid #dcdcdc; align-items: stretch; }
.tab { padding: 0 13px; line-height: 21px; color: #333; white-space: nowrap; }
.tab.active { background: #5ba6f5; color: #fff; border-radius: 2px 2px 0 0; }

/* ribbon */
.ribbon {
  height: 98px; flex: none; display: flex;
  background: linear-gradient(#ffffff 40%, #e9ecec);
  border-bottom: 2px solid #9b9d9f;
}
.rg { display: flex; flex-direction: column; margin-top: 2px; height: 93px; border-right: 1px solid #d4d6d6; }
.g1 { width: 140px; } .g2 { width: 194px; } .g3 { width: 276px; } .g4 { width: 238px; } .g5 { width: 118px; } .g6 { width: 152px; }
.rg-body { height: 70px; display: flex; }
.pl7 { padding-left: 7px; } .pl8 { padding-left: 8px; } .pl9 { padding-left: 9px; } .pl10 { padding-left: 10px; }
.col { display: flex; flex-direction: column; flex: none; }
.w40 { width: 40px; } .w80 { width: 80px; } .w66 { width: 66px; } .w111 { width: 111px; }
.w55 { width: 55px; } .w54 { width: 54px; } .w42 { width: 42px; } .w47 { width: 47px; }
.ri { height: 23px; display: flex; align-items: center; gap: 3px; white-space: nowrap; color: #222; }
.ri.off { color: #b4b4b4; }
.big { align-items: flex-start; padding-top: 5px; }
.big-ic { width: 29px; height: 30px; }
.big-lb { margin-top: 5px; width: 29px; text-align: center; white-space: nowrap; }
.b30 { width: 30px; }
.off-t { color: #b4b4b4; }
.g6 .big { align-items: center; padding-top: 7px; width: 49px; margin-right: 5px; }
.g6 .big-lb { margin-top: 4px; width: auto; }
.smart { width: 31px; }
.under { margin: 3px 0 0; }
.rg-label { flex: 1; display: flex; align-items: center; justify-content: center; color: #222; padding-top: 2px; }
.rg-label.low { padding-top: 8px; }
.caret { display: inline-block; width: 0; height: 0; margin-left: 3px; border: 3px solid transparent; border-top: 4px solid #666; border-bottom: 0; flex: none; }
.caret.dark { margin-left: 7px; border-width: 4px 4px 0; border-color: #555 transparent transparent; }
.caret.light { border-top-color: #bbb; }

/* selector bar */
.selbar { height: 27px; flex: none; display: flex; gap: 2px; padding-top: 2px; background: #c9cbce; border-bottom: 1px solid #9fa1a3; }
.sel { width: 98px; height: 22px; background: #fff; display: flex; align-items: center; justify-content: space-between; padding: 0 6px 0 3px; font-size: 12px; }
.sel.first { width: 95px; padding-left: 0; }

/* main */
.main { flex: 1; display: flex; min-height: 0; }
.strip { height: 12px; flex: none; background: #d4d6d9; position: relative; }
.x { position: absolute; right: 3px; top: -2px; font: 12px/14px "Liberation Sans", sans-serif; color: #777; }

.nav { width: 176px; flex: none; display: flex; flex-direction: column; border-right: 1px solid #b4b4b4; }
.nav-title { height: 22px; flex: none; padding: 3px 3px 0; color: #999; background: #f0f0f0; border-bottom: 1px solid #cfcfcf; }
.nav-tools { height: 27px; flex: none; display: flex; align-items: center; gap: 4px; background: #f4f4f4; border-bottom: 1px solid #cfcfcf; padding: 0 1px 0 2px; }
.nav-add { width: 12px; height: 11px; margin-right: auto; }
.vbtn { width: 24px; height: 21px; background: #e8f2fc; border: 1px solid #7cb6f0; border-radius: 3px; display: flex; align-items: center; justify-content: center; }
.vic { width: 14px; height: 12px; }
.nav-body { flex: 1; display: flex; min-height: 0; position: relative; padding-top: 3px; }
.tree { width: 165px; flex: none; }
.tg { height: 24px; display: flex; align-items: center; gap: 5px; white-space: nowrap; }
.fo { width: 13px; height: 13px; }
.vip { width: 30px; height: 10px; background: #ffd966; color: #b8902a; font: bold 8px/10px "Liberation Serif", serif; text-align: center; }
.tc { height: 24px; padding-left: 35px; display: flex; align-items: center; }
.tci { width: 126px; height: 21px; padding-left: 3px; display: flex; align-items: center; gap: 6px; white-space: nowrap; overflow: hidden; }
.tci.sel-row { background: #c6d7ee; }
.hbar { position: absolute; left: 9px; bottom: 0; width: 127px; height: 7px; background: #c8c8c8; border-radius: 4px; }
.nav-track { width: 10px; flex: none; }
.nav-thumb { width: 7px; height: 543px; margin-top: 14px; background: #c8c8c8; border-radius: 4px 4px 0 0; }

.mid { width: 374px; margin-left: 4px; flex: none; display: flex; flex-direction: column; }
.panel { display: flex; flex-direction: column; border: solid #b4b4b4; border-width: 0 1px 1px; }
.p1 { height: 225px; flex: none; margin-bottom: 4px; }
.p2 { flex: 1; min-height: 0; }
.ptabs { flex: none; display: flex; background: #efefef; border-bottom: 1px solid #cfcfcf; }
.t22 { height: 23px; } .t23 { height: 23px; }
.ptab { width: 65px; text-align: center; line-height: 23px; color: #999; background: #dcdcdc; border-right: 1px solid #cfcfcf; font-weight: 500; }
.t23 .ptab { line-height: 25px; }
.ptab.on { color: #222; background: #f0f0f0; }
.ptools { height: 27px; flex: none; display: flex; align-items: center; padding: 1px 0 0 6px; background: #f6f6f6; border-bottom: 1px solid #cfcfcf; position: relative; }
.pt { display: flex; align-items: center; gap: 3px; white-space: nowrap; flex: none; }
.pt .caret { margin-left: 2px; }
.w63 { width: 63px; } .w51 { width: 51px; } .w52 { width: 52px; } .w75 { width: 75px; } .w62 { width: 62px; }
.more { margin-left: auto; margin-right: 3px; font: 8px/10px "DejaVu Sans", sans-serif; letter-spacing: -1px; color: #333; white-space: nowrap; }
.search { height: 20px; flex: none; display: flex; align-items: center; justify-content: space-between; padding: 0 7px 0 2px; color: #999; border-bottom: 1px solid #cfcfcf; }
.srch { width: 12px; height: 12px; }
.clist { flex: 1; padding-left: 10px; background: #fff; }
.cgroup { height: 28px; display: flex; align-items: center; gap: 8px; }
.tri { width: 0; height: 0; border: solid transparent; border-width: 0 0 5px 5px; border-bottom-color: #444; }
.citem { width: 38px; height: 21px; margin: -1px 0 0 30px; background: #b4cfee; padding: 1px 0 0 3px; line-height: 21px; }

.tbl-wrap { flex: 1; min-height: 0; display: flex; overflow: hidden; }
.props { width: 357px; flex: none; table-layout: fixed; border-collapse: separate; border-spacing: 0; align-self: flex-start; }
.c0 { width: 22px; } .c1 { width: 101px; } .c2 { width: 193px; } .c3 { width: 41px; }
.props th, .props td { height: 21px; padding: 2px 0 0 3px; border: solid #d2d2d2; border-width: 0 1px 1px 0; font-weight: 400; white-space: nowrap; overflow: hidden; line-height: 18px; }
.props th { background: #f0f0f0; text-align: center; padding: 2px 0 0; color: #333; }
.props th.hl { background: #7db5f5; color: #fff; }
.props td:first-child { background: #f0f0f0; color: #555; text-align: center; padding: 2px 0 0; }
.props td:last-child { padding: 0; }
.blue { color: #2f66e8; }
.cb { display: block; width: 14px; height: 14px; margin: 0 auto 0 13px; border: 1px solid #8c8c8c; border-radius: 3px; background: #fff; }
.rb { display: inline-block; width: 9px; height: 10px; margin: -2px 2px 2px 1px; vertical-align: middle; }
.grp { padding-left: 2px !important; }
.minus { display: inline-block; width: 13px; height: 13px; margin-right: 6px; border: 1px solid #777; border-radius: 2px; vertical-align: -2px; background: linear-gradient(#555, #555) center / 7px 1px no-repeat; }
.gv { background: #e8e8e8; }
.sub { padding-left: 31px !important; background: linear-gradient(#d8d8d8, #d8d8d8) 9px 0 / 1px 100% no-repeat, linear-gradient(#d8d8d8, #d8d8d8) 9px 10px / 16px 1px no-repeat; }
.tbl-track { flex: 1; padding: 14px 0 0 4px; }
.tbl-thumb { width: 8px; height: 420px; background: #c8c8c8; border-radius: 4px; }

.bottom-tabs { height: 26px; flex: none; background: #eeeeee; padding: 5px 0 0 6px; }
.btab { display: block; width: 80px; height: 21px; background: #fff; border: 1px solid #cfcfcf; border-bottom: 0; border-radius: 3px 3px 0 0; text-align: center; line-height: 22px; }

.splitter { width: 4px; flex: none; background: #e4e4e4; display: flex; align-items: center; }
.grip { display: block; width: 5px; height: 100px; margin: 8px 0 0 -1px; background: #555; flex: none; }
.canvas { flex: 1; min-width: 0; background: #000; overflow: hidden; }
.scene { width: 821px; height: 839px; overflow: hidden; }
.ax { font: 15px "Liberation Sans", sans-serif; }
.mark { position: absolute; left: 0; top: 0; width: 1379px; height: 1002px; pointer-events: none; }
```
